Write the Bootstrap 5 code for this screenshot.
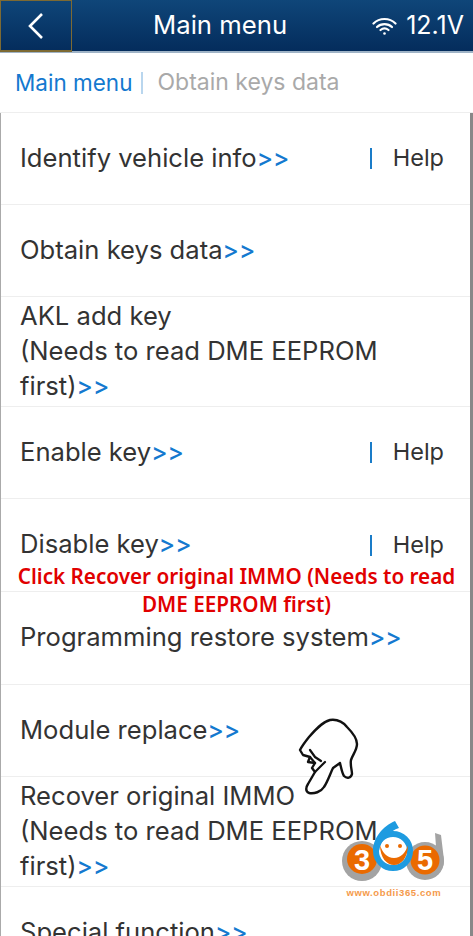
<!DOCTYPE html>
<html><head><meta charset="utf-8">
<link href="https://cdn.jsdelivr.net/npm/bootstrap@5.3.0/dist/css/bootstrap.min.css" rel="stylesheet">
<style>
html,body{height:936px;overflow:hidden;background:#fff}
body{font-family:Inter,"Noto Sans",sans-serif;color:#333;position:relative}
.topbar{height:53px;background:linear-gradient(#0f4679,#042c5c);color:#fff;border-bottom:2px solid #9fb3c6}
.backbtn{width:72px;height:52px;border:1px solid #7d6a33;border-bottom-width:2px}
.toptitle{font-size:25.700px;flex:none;width:134px;margin-left:81px;white-space:nowrap}
.volt{font-size:25px;gap:9px;padding-right:9px;margin-left:auto}
.crumbs{height:60px;font-size:22.500px;padding-left:15px;border-bottom:1px solid #eee}
.crumbs .cur{color:#1479cf}
.crumbs .sep{width:2px;height:22px;background:#b9d6ee;margin:0 14px 0 9px}
.crumbs .dim{color:#a9a9a9;font-size:23px}
.menu{border-left:1px solid #aaa;border-right:3px solid #888}
.rowitem{font-size:25.600px;line-height:35px;padding:0 26px 2px 19px;border-bottom:1px solid #eee;height:92px}
.rowitem.tall{height:110px;padding-top:1px;padding-bottom:0;align-items:flex-start!important}
.rowitem.h93{height:93px}
.arrows{color:#1479cf;font-weight:500;font-size:24.500px}
.helplink{font-size:23.500px}
.helplink i{display:inline-block;width:2px;height:21px;background:#1a7cc8;margin-right:21px;vertical-align:-3px}
.note{position:absolute;left:0;right:0;top:562px;text-align:center;color:#e10000;font-family:"Noto Sans",sans-serif;font-size:20.700px;font-weight:600;line-height:28px;padding:0 12px}
.hand{position:absolute;left:296px;top:717px}
.logo{position:absolute;left:340px;top:820px}
.logotext{font-family:"Liberation Sans",sans-serif;font-size:9.500px;font-weight:700;fill:#f59a4b;letter-spacing:.6px}
.logonum{font-family:"Liberation Sans",sans-serif;font-size:29px;font-weight:700;fill:#fff;text-anchor:middle}
</style></head><body>
<header class="topbar position-relative d-flex align-items-start">
  <div class="backbtn d-flex align-items-center justify-content-center">
    <svg width="18" height="28" viewBox="0 0 18 28"><path d="M15 2 3 14l12 12" fill="none" stroke="#fff" stroke-width="2.600"/></svg>
  </div>
  <div class="toptitle text-center align-self-center">Main menu</div>
  <div class="volt d-flex align-items-center align-self-center">
    <svg width="25" height="20" viewBox="0 0 25 20" fill="none" stroke="#fff" stroke-width="2.200" stroke-linecap="round"><path d="M1.500 7.500C7.500 1.500 17.500 1.500 23.500 7.500"/><path d="M5 11c4-3.800 11-3.800 15 0"/><path d="M8.500 14c2.400-2 5.600-2 8 0"/><circle cx="12.500" cy="17.500" r="1.300" fill="#fff" stroke="none"/></svg>
    <span>12.1V</span>
  </div>
</header>
<nav class="crumbs d-flex align-items-center"><span class="cur">Main menu</span><span class="sep"></span><span class="dim">Obtain keys data</span></nav>
<main class="menu">
  <div class="rowitem d-flex align-items-center justify-content-between"><span>Identify vehicle info<span class="arrows">&gt;&gt;</span></span><span class="helplink"><i></i>Help</span></div>
  <div class="rowitem d-flex align-items-center"><span>Obtain keys data<span class="arrows">&gt;&gt;</span></span></div>
  <div class="rowitem tall d-flex"><span>AKL add key<br>(Needs to read DME EEPROM<br>first)<span class="arrows">&gt;&gt;</span></span></div>
  <div class="rowitem d-flex align-items-center justify-content-between"><span>Enable key<span class="arrows">&gt;&gt;</span></span><span class="helplink"><i></i>Help</span></div>
  <div class="rowitem h93 d-flex align-items-center justify-content-between"><span>Disable key<span class="arrows">&gt;&gt;</span></span><span class="helplink"><i></i>Help</span></div>
  <div class="rowitem h93 d-flex align-items-center"><span>Programming restore system<span class="arrows">&gt;&gt;</span></span></div>
  <div class="rowitem d-flex align-items-center"><span>Module replace<span class="arrows">&gt;&gt;</span></span></div>
  <div class="rowitem tall d-flex"><span>Recover original IMMO<br>(Needs to read DME EEPROM<br>first)<span class="arrows">&gt;&gt;</span></span></div>
  <div class="rowitem d-flex align-items-center"><span>Special function<span class="arrows">&gt;&gt;</span></span></div>
</main>
<div class="note">Click Recover original IMMO (Needs to read DME EEPROM first)</div>
<svg class="hand" width="66" height="84" viewBox="0 0 66 84"><path d="M34 3C41 2 47 5 51 10 56 15 61 21 61 27 61 33 57 37 55 43 54 48 56 53 56 57 55 61 51 62 48 59 46 56 45 50 44 46L37 51C34 57 32 64 28 70 25 75 18 77 13 76 9 74 10 70 12 67L19 55 16 51 19 46 12 45 14 40 7 38 4 33C6 29 9 25 13 20 19 13 26 5 34 3Z" fill="#fff" stroke="#111" stroke-width="2.400" stroke-linejoin="round"/><path d="M14 33 19 40 M19 46 14 40 M19 40 25 44 M19 55 29 45" fill="none" stroke="#111" stroke-width="2.200" stroke-linecap="round"/></svg>
<svg class="logo" width="108" height="80" viewBox="0 0 108 80">
  <path d="M95 13 101 15 104 40C104 50 96 59 85 59L85 40 97 40Z" fill="#a3a3a3"/>
  <circle cx="22" cy="41" r="20" fill="#a3a3a3"/>
  <circle cx="85" cy="41" r="19" fill="#a3a3a3"/>
  <circle cx="22" cy="39" r="15" fill="#ea6a00"/>
  <circle cx="85" cy="40" r="14.500" fill="#ea6a00"/>
  <circle cx="53" cy="31" r="17" fill="#fff" stroke="#1e9be0" stroke-width="6"/>
  <path d="M33 31C33 18 43 6 55 1L59 8C50 11 41 19 39 31Z" fill="#1e9be0"/>
  <path d="M40 25C40 38 47 45 54 45 61 45 68 38 68 25 66 32 61 38 54 38 47 38 42 32 40 25Z" fill="#ea6a00"/>
  <circle cx="47" cy="26" r="2" fill="#ea6a00"/><circle cx="60" cy="26" r="2" fill="#ea6a00"/>
  <text class="logonum" x="22" y="50">3</text><text class="logonum" x="85" y="50">5</text>
  <text class="logotext" x="6.500" y="76">www.obdii365.com</text>
</svg>
<script src="https://cdn.jsdelivr.net/npm/bootstrap@5.3.0/dist/js/bootstrap.bundle.min.js"></script>
</body></html>
